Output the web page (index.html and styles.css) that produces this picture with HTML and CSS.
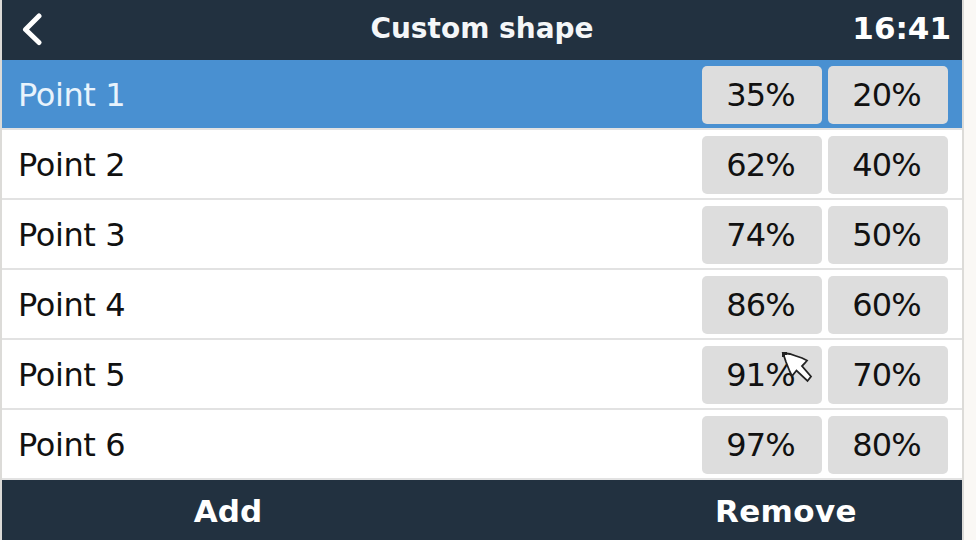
FILE: index.html
```html
<!DOCTYPE html>
<html lang="en">
<head>
<meta charset="utf-8">
<title>Custom shape</title>
<link rel="stylesheet" href="styles.css">
</head>
<body>
<main class="screen">
  <header class="header">
    <svg class="back" viewBox="0 0 22 34"><path d="M19 4 5.5 17.5 19 30.5"/></svg>
    <h1 class="title">Custom shape</h1>
    <span class="clock">16:41</span>
  </header>
  <ul class="list">
    <li class="row selected"><span class="label">Point 1</span><span class="value">35%</span><span class="value">20%</span></li>
    <li class="row"><span class="label">Point 2</span><span class="value">62%</span><span class="value">40%</span></li>
    <li class="row"><span class="label">Point 3</span><span class="value">74%</span><span class="value">50%</span></li>
    <li class="row"><span class="label">Point 4</span><span class="value">86%</span><span class="value">60%</span></li>
    <li class="row"><span class="label">Point 5</span><span class="value">91%</span><span class="value">70%</span></li>
    <li class="row"><span class="label">Point 6</span><span class="value">97%</span><span class="value">80%</span></li>
  </ul>
  <footer class="footer"><span class="action">Add</span><span class="action remove">Remove</span></footer>
</main>
<svg class="cursor" viewBox="0 0 34 34"><path d="M4 4 11 5 17 7 23 9 28 11.5 26 14 23 17 32 27.5 28.5 32 17.500 21.500 13 27 11 23 7 13z"/><path class="tip" d="M3 3h5v3H6v2H3z"/></svg>
</body>
</html>
```

FILE: styles.css
```css
* { box-sizing: border-box; }
body {
  margin: 0;
  width: 976px;
  height: 540px;
  overflow: hidden;
  background: #faf8f5;
  font-family: "DejaVu Sans", sans-serif;
  color: #111;
}
.screen {
  width: 964px;
  height: 540px;
  border: solid #dcdbd8;
  border-width: 0 2px;
  background: #fff;
}
.header {
  display: grid;
  grid-template-columns: 193px 1fr 200px;
  align-items: center;
  height: 60px;
  padding: 0 11px 2px 18px;
  background: #223140;
  color: #fff;
}
.back { width: 22px; height: 34px; fill: none; stroke: #fff; stroke-width: 5; stroke-linecap: round; stroke-linejoin: round; }
.title { margin: 0; text-align: center; font-size: 28px; line-height: 34px; color: #f4f6f8; }
.clock { text-align: right; font-size: 31px; font-weight: bold; line-height: 32px; padding-bottom: 2px; }
.list { margin: 0; padding: 0; list-style: none; }
.row {
  display: flex;
  gap: 6px;
  align-items: center;
  height: 70px;
  padding: 2px 14px 0 16px;
  border-bottom: 2px solid #e2e2e2;
}
.selected { background: #4990d1; }
.selected .label { color: #e8f3fc; }
.label { flex: 1; font-size: 32px; letter-spacing: -0.4px; }
.value {
  width: 120px;
  height: 58px;
  border-radius: 5px;
  background: #ddd;
  text-align: center;
  font-size: 32px;
  letter-spacing: -0.8px;
  padding-right: 3px;
  line-height: 58px;
}
.footer {
  display: grid;
  grid-template-columns: 452px 352px;
  justify-content: space-between;
  height: 60px;
  background: #223140;
  color: #fff;
}
.action { text-align: center; font-size: 31px; font-weight: bold; line-height: 62px; }
.remove { letter-spacing: 0.4px; }
.cursor { position: absolute; left: 779px; top: 349px; width: 34px; height: 34px; fill: #fff; stroke: #222; stroke-width: 1.8; }
.tip { fill: #222; stroke: none; }
```
